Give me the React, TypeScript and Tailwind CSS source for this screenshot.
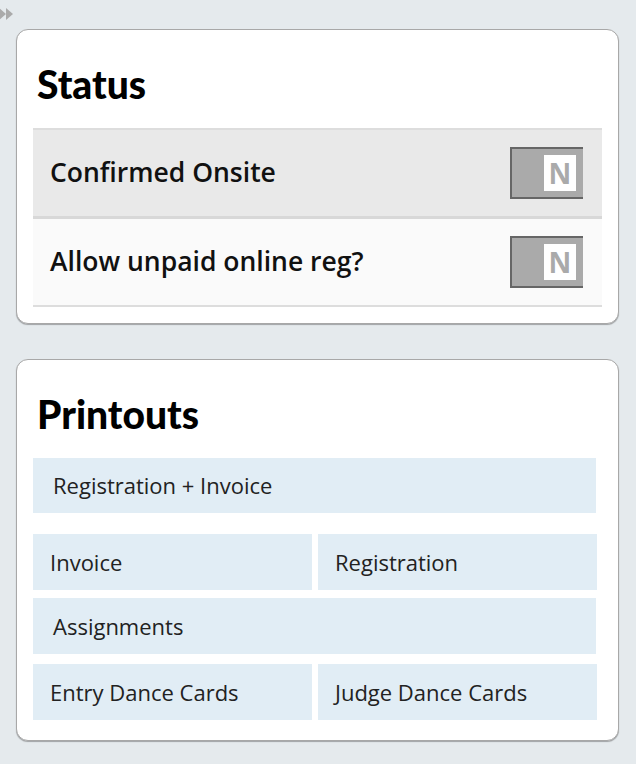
import React from "react";

const sans = { fontFamily: '"Open Sans", "Liberation Sans", sans-serif' };

function Toggle() {
  return (
    <div className="flex h-[52px] w-[73px] items-center justify-end border-b-2 border-l-2 border-t-2 border-[#666] bg-[#aaa] pr-[7px]">
      <div className="flex h-9 w-8 items-center justify-center bg-white text-[28px] font-bold leading-none text-[#aaa]">
        N
      </div>
    </div>
  );
}

function Title({ children }: { children: React.ReactNode }) {
  return (
    <div className="h-[98px] pl-1 pt-[35px]">
      <h2 className="text-[39px] font-black leading-none text-black" style={{ fontFamily: "Lato, sans-serif" }}>
        {children}
      </h2>
    </div>
  );
}

function PrintButton({ label, half, className = "" }: { label: string; half?: boolean; className?: string }) {
  return (
    <button
      className={
        "flex items-center bg-[#e1edf5] text-left text-[22px] text-[#222] " +
        (half ? "h-14 w-[279px] pl-[17px] " : "w-[563px] pl-5 ") +
        className
      }
    >
      {label}
    </button>
  );
}

export default function App() {
  return (
    <div className="min-h-[764px] bg-[#e5eaed]" style={sans}>
      <div className="h-[29px] pt-2">
        <svg width="15" height="12" viewBox="0 0 15 12" className="block">
          <polygon points="-1,0 6,6 -1,12" fill="#aaa" />
          <polygon points="6,0 13,6 6,12" fill="#aaa" />
        </svg>
      </div>

      <section className="ml-4 w-[603px] rounded-[12px] border border-[#a8a8a8] bg-white px-4 pb-4 shadow-[0_1px_1px_rgba(0,0,0,0.3)]">
        <Title>Status</Title>
        <div className="border-b-2 border-t-2 border-[#ddd]">
          <div className="flex h-[86px] items-center justify-between bg-[#e9e9e9] pl-[17px] pr-[19px]">
            <span className="text-[26.5px] font-semibold text-[#111]">Confirmed Onsite</span>
            <Toggle />
          </div>
          <div className="h-[3px] bg-[#d8d8d8]" />
          <div className="flex h-[86px] items-center justify-between bg-[#fafafa] pl-[17px] pr-[19px]">
            <span className="text-[26.5px] font-semibold text-[#111]">Allow unpaid online reg?</span>
            <Toggle />
          </div>
        </div>
      </section>

      <section className="ml-4 mt-[35px] w-[603px] rounded-[12px] border border-[#a8a8a8] bg-white px-4 pb-5 shadow-[0_1px_1px_rgba(0,0,0,0.3)]">
        <Title>Printouts</Title>
        <PrintButton label="Registration + Invoice" className="h-[55px]" />
        <div className="mt-[21px] flex gap-[6px]">
          <PrintButton label="Invoice" half />
          <PrintButton label="Registration" half />
        </div>
        <PrintButton label="Assignments" className="mt-2 h-14" />
        <div className="mt-[10px] flex gap-[6px]">
          <PrintButton label="Entry Dance Cards" half />
          <PrintButton label="Judge Dance Cards" half />
        </div>
      </section>
    </div>
  );
}
